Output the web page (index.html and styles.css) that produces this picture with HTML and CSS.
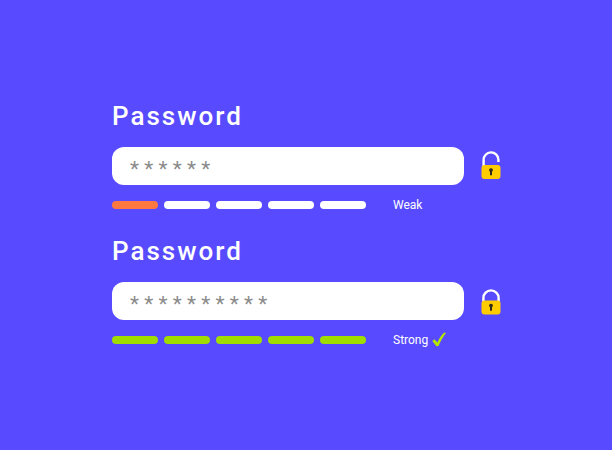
FILE: index.html
```
<!DOCTYPE html>
<html lang="en">
<head>
    <meta charset="UTF-8">
    <meta name="viewport" content="width=device-width, initial-scale=1.0">
    <title>Password Strength</title>
    <link rel="stylesheet" href="styles.css">
</head>
<body>
    <form class="password-form">
        <div class="field">
            <label class="field-label" for="password-weak">Password</label>
            <div class="input-row">
                <input type="text" class="password-input" id="password-weak" value="* * * * * *" autocomplete="off">
                <svg class="lock" viewBox="0 0 20 30" aria-hidden="true">
                    <path d="M2.600 15V9a7.400 7.400 0 0 1 14.800-0.400V11" fill="none" stroke="#fff" stroke-width="2.400"/>
                    <rect x="0.5" y="14" width="19" height="14" rx="3" fill="#fc0"/>
                    <path d="M10 17.2a1.9 1.9 0 0 1 1 3.5v3.5H9v-3.5a1.9 1.9 0 0 1 1-3.5z" fill="#33291a"/>
                </svg>
            </div>
            <div class="strength weak">
                <div class="bars" role="meter" aria-label="Password strength" aria-valuemin="0" aria-valuemax="5" aria-valuenow="1">
                    <span class="bar filled"></span>
                    <span class="bar"></span>
                    <span class="bar"></span>
                    <span class="bar"></span>
                    <span class="bar"></span>
                </div>
                <div class="strength-text">Weak</div>
            </div>
        </div>

        <div class="field">
            <label class="field-label" for="password-strong">Password</label>
            <div class="input-row">
                <input type="text" class="password-input" id="password-strong" value="* * * * * * * * * *" autocomplete="off">
                <svg class="lock" viewBox="0 0 20 30" aria-hidden="true">
                    <path d="M2.400 15.500v-3.500a7.600 7.600 0 0 1 15.200 0v3.500" fill="none" stroke="#fff" stroke-width="2.400"/>
                    <rect x="0.5" y="14.5" width="19" height="14" rx="3" fill="#fc0"/>
                    <path d="M10 17.7a1.9 1.9 0 0 1 1 3.5v3.5H9v-3.5a1.9 1.9 0 0 1 1-3.5z" fill="#33291a"/>
                </svg>
            </div>
            <div class="strength strong">
                <div class="bars" role="meter" aria-label="Password strength" aria-valuemin="0" aria-valuemax="5" aria-valuenow="5">
                    <span class="bar filled"></span>
                    <span class="bar filled"></span>
                    <span class="bar filled"></span>
                    <span class="bar filled"></span>
                    <span class="bar filled"></span>
                </div>
                <div class="strength-text">
                    Strong
                    <svg class="check" viewBox="0 0 14 16" aria-hidden="true">
                        <path d="M0.300 9 2.400 7.200l3 3.200C7.200 6.200 9.300 3 12.400 0.400L14 1.100C10.900 5 8.500 9.300 6.500 14L4.400 14.300z" fill="#b4e600"/>
                    </svg>
                </div>
            </div>
        </div>
    </form>
</body>
</html>
```
FILE: styles.css
```
body {
    margin: 0;
    font-family: Roboto, Arial, sans-serif;
    background-color: #584bff;
    color: #fff;
    min-height: 100vh;
    display: flex;
    flex-direction: column;
    justify-content: center;
}
.password-form {
    display: flex;
    flex-direction: column;
    gap: 22px;
    padding: 0 111px 2px 112px;
}
.field-label {
    display: block;
    margin-bottom: 15px;
    font-size: 26px;
    font-weight: 500;
    line-height: 32px;
    letter-spacing: 2px;
}
.input-row {
    display: flex;
    align-items: center;
    gap: 17px;
}
.password-input {
    flex: 1;
    min-width: 0;
    height: 38px;
    padding: 6px 18px 0;
    border: none;
    border-radius: 12px;
    box-sizing: border-box;
    background-color: #fff;
    color: #8c8c8c;
    font-family: inherit;
    font-size: 21px;
}
.lock {
    width: 20px;
    height: 30px;
}
.strength {
    display: flex;
    align-items: center;
    gap: 27px;
    margin-top: 12px;
}
.bars {
    flex: 1;
    display: flex;
    gap: 6px;
}
.bar {
    flex: 1;
    height: 8px;
    border-radius: 4px;
    background-color: #fff;
}
.weak .filled {
    background-color: #ff7840;
}
.strong .filled {
    background-color: #a0dc00;
}
.strength-text {
    display: flex;
    align-items: center;
    gap: 4px;
    width: 108px;
    font-size: 12px;
    line-height: 16px;
}
.check {
    width: 14px;
    height: 16px;
}
@media (max-width: 480px) {
    .password-form {
        padding: 0 24px;
    }
}
```
